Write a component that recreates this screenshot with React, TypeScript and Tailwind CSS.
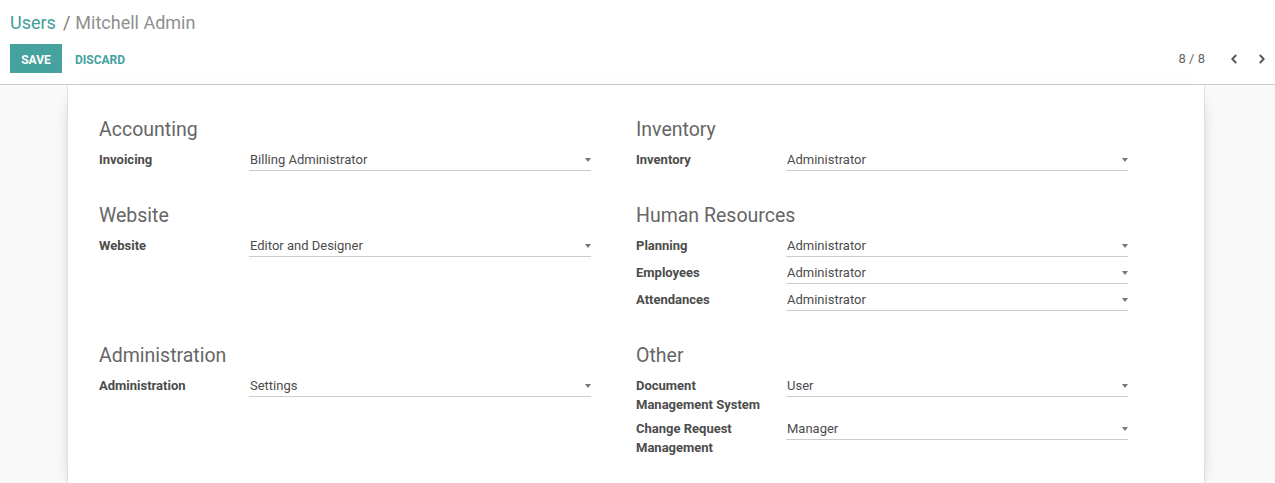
import React from 'react';
import { ChevronLeft, ChevronRight } from 'lucide-react';

type Row = { label: string; value: string };
type Group = { title: string; rows: Row[] };

const groups: Group[] = [
  { title: 'Accounting', rows: [{ label: 'Invoicing', value: 'Billing Administrator' }] },
  { title: 'Inventory', rows: [{ label: 'Inventory', value: 'Administrator' }] },
  { title: 'Website', rows: [{ label: 'Website', value: 'Editor and Designer' }] },
  {
    title: 'Human Resources',
    rows: [
      { label: 'Planning', value: 'Administrator' },
      { label: 'Employees', value: 'Administrator' },
      { label: 'Attendances', value: 'Administrator' },
    ],
  },
  { title: 'Administration', rows: [{ label: 'Administration', value: 'Settings' }] },
  {
    title: 'Other',
    rows: [
      { label: 'Document Management System', value: 'User' },
      { label: 'Change Request Management', value: 'Manager' },
    ],
  },
];

const SelectField: React.FC<{ value: string }> = ({ value }) => (
  <div className="w-[342px] mb-px flex items-center justify-between border-b border-[#cccccc] pb-px pl-px">
    <span className="text-[13px] leading-[19px] text-[#4c4c4c]">{value}</span>
    <span className="w-0 h-0 border-x-[3.5px] border-x-transparent border-t-[4px] border-t-[#777777]" />
  </div>
);

const FieldGroup: React.FC<{ group: Group }> = ({ group }) => (
  <div>
    <h2 className="text-[19.5px] leading-[24px] text-[#666666] mb-[8px]">{group.title}</h2>
    <div className="flex flex-col gap-[5px]">
      {group.rows.map((row) => (
        <div key={row.label} className="flex items-start">
          <div className="w-[150px] pr-4 text-[13px] leading-[19px] font-bold text-[#4c4c4c]">{row.label}</div>
          <SelectField value={row.value} />
        </div>
      ))}
    </div>
  </div>
);

const App: React.FC = () => {
  return (
    <div className="min-h-screen flex flex-col bg-[#f9f9f9] font-['Roboto',sans-serif]">
      <div className="bg-white border-b border-[#cccccc] px-[10px] pt-[9px] pb-[11px]">
        <div className="text-[18px] leading-[27px] flex items-center">
          <span className="text-[#3f9e99]">Users</span>
          <span className="ml-[7px] mr-[5px] text-[#777777]">/</span>
          <span className="text-[#8f8f8f]">Mitchell Admin</span>
        </div>
        <div className="mt-[8px] flex items-center justify-between">
          <div className="flex items-center">
            <button className="h-[29px] w-[52px] pt-[2px] bg-[#45a29e] text-white text-[12px] font-bold uppercase leading-none">
              Save
            </button>
            <button className="h-[29px] ml-[3px] px-[10px] pt-[2px] text-[#45a29e] text-[12px] font-bold uppercase leading-none">
              Discard
            </button>
          </div>
          <div className="flex items-center text-[#666666]">
            <span className="text-[13px] mr-[22px]">8 / 8</span>
            <ChevronLeft size={14} strokeWidth={3.2} className="text-[#555555]" />
            <ChevronRight size={14} strokeWidth={3.2} className="ml-[14px] -mr-[4px] text-[#555555]" />
          </div>
        </div>
      </div>
      <div className="flex-1 flex pl-[67px] pr-[70px]">
        <div className="flex-1 bg-white shadow-[0_5px_20px_-15px_black] border-x border-[#e0e0e0] px-[31px] pt-[33px] pb-8">
          <div className="grid grid-cols-2 gap-y-[32px]">
            {groups.map((g) => (
              <FieldGroup key={g.title} group={g} />
            ))}
          </div>
        </div>
      </div>
    </div>
  );
};

export default App;
